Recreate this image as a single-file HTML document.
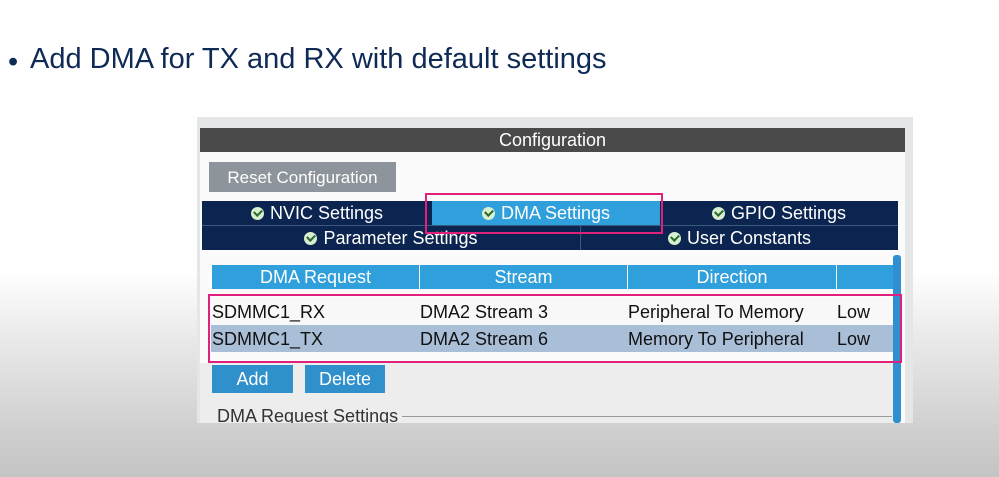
<!DOCTYPE html>
<html><head><meta charset="utf-8"><style>
*{margin:0;padding:0;box-sizing:border-box}
body{width:999px;height:477px;overflow:hidden;position:relative;font-family:"Liberation Sans",sans-serif;background:linear-gradient(#fff 0,#fff 270px,#ececec 330px,#d2d2d2 420px,#c4c4c4 477px)}
.a{position:absolute}
.t{color:#fff;font-size:18px;text-align:center;line-height:24px;height:24px}
.ck{display:inline-block;width:13px;height:13px;border-radius:50%;background:#d8f0d0;vertical-align:-1px;margin-right:6px;position:relative}
.ck:after{content:"";position:absolute;left:3px;top:2px;width:6px;height:4px;border-left:2px solid #2a6a30;border-bottom:2px solid #2a6a30;transform:rotate(-45deg)}
.cell{position:absolute;font-size:18px;color:#111;line-height:26px;padding-left:1px}
</style></head><body>
<div class="a" style="left:8px;top:46px;font-size:29px;color:#0e2a55">•</div>
<div class="a" style="left:30px;top:43px;font-size:29px;color:#0e2a55;white-space:nowrap">Add DMA for TX and RX with default settings</div>

<div class="a" style="left:197px;top:117px;width:716px;height:306px;background:#e4e6e8"></div>
<div class="a" style="left:200px;top:152px;width:705px;height:271px;background:#fbfbfb"></div>
<div class="a t" style="left:200px;top:128px;width:705px;height:24px;background:#4a4a4a">Configuration</div>
<div class="a t" style="left:209px;top:162px;width:187px;height:30px;line-height:31px;background:#8e949b;font-size:17px">Reset Configuration</div>

<div class="a" style="left:202px;top:201px;width:696px;height:49px;background:#0b2550"></div>
<div class="a t" style="left:202px;top:201px;width:230px"><span class="ck"></span>NVIC Settings</div>
<div class="a t" style="left:432px;top:201px;width:228px;background:#2fa0dc"><span class="ck"></span>DMA Settings</div>
<div class="a t" style="left:660px;top:201px;width:238px"><span class="ck"></span>GPIO Settings</div>
<div class="a" style="left:202px;top:225px;width:696px;height:1px;background:#3a5a80"></div>
<div class="a" style="left:580px;top:226px;width:1px;height:24px;background:#3a5a80"></div>
<div class="a t" style="left:202px;top:226px;width:378px"><span class="ck"></span>Parameter Settings</div>
<div class="a t" style="left:581px;top:226px;width:317px"><span class="ck"></span>User Constants</div>
<div class="a" style="left:425px;top:193px;width:238px;height:41px;border:2px solid #e0207a"></div>

<div class="a t" style="left:212px;top:265px;width:207px;background:#2fa0dc">DMA Request</div>
<div class="a t" style="left:420px;top:265px;width:207px;background:#2fa0dc">Stream</div>
<div class="a t" style="left:628px;top:265px;width:208px;background:#2fa0dc">Direction</div>
<div class="a t" style="left:837px;top:265px;width:56px;background:#2fa0dc"></div>
<div class="a" style="left:893px;top:255px;width:8px;height:168px;background:#2f8fd0;border-radius:3px"></div>

<div class="a" style="left:211px;top:298px;width:682px;height:27px;background:#f8f8f8"></div>
<div class="a" style="left:211px;top:325px;width:682px;height:27px;background:#a9bfd8"></div>
<div class="cell" style="left:211px;top:299px">SDMMC1_RX</div>
<div class="cell" style="left:419px;top:299px">DMA2 Stream 3</div>
<div class="cell" style="left:627px;top:299px">Peripheral To Memory</div>
<div class="cell" style="left:836px;top:299px">Low</div>
<div class="cell" style="left:211px;top:326px">SDMMC1_TX</div>
<div class="cell" style="left:419px;top:326px">DMA2 Stream 6</div>
<div class="cell" style="left:627px;top:326px">Memory To Peripheral</div>
<div class="cell" style="left:836px;top:326px">Low</div>
<div class="a" style="left:208px;top:294px;width:694px;height:69px;border:2px solid #e0207a"></div>

<div class="a" style="left:200px;top:363px;width:693px;height:60px;background:#ededed"></div>
<div class="a t" style="left:212px;top:365px;width:81px;height:28px;line-height:28px;background:#2f90cc">Add</div>
<div class="a t" style="left:305px;top:365px;width:80px;height:28px;line-height:28px;background:#2f90cc">Delete</div>
<div class="a" style="left:402px;top:416px;width:490px;height:1px;background:#999"></div>
<div class="a" style="left:217px;top:406px;font-size:18px;color:#333;line-height:20px;height:17px;overflow:hidden">DMA Request Settings</div>
</body></html>
